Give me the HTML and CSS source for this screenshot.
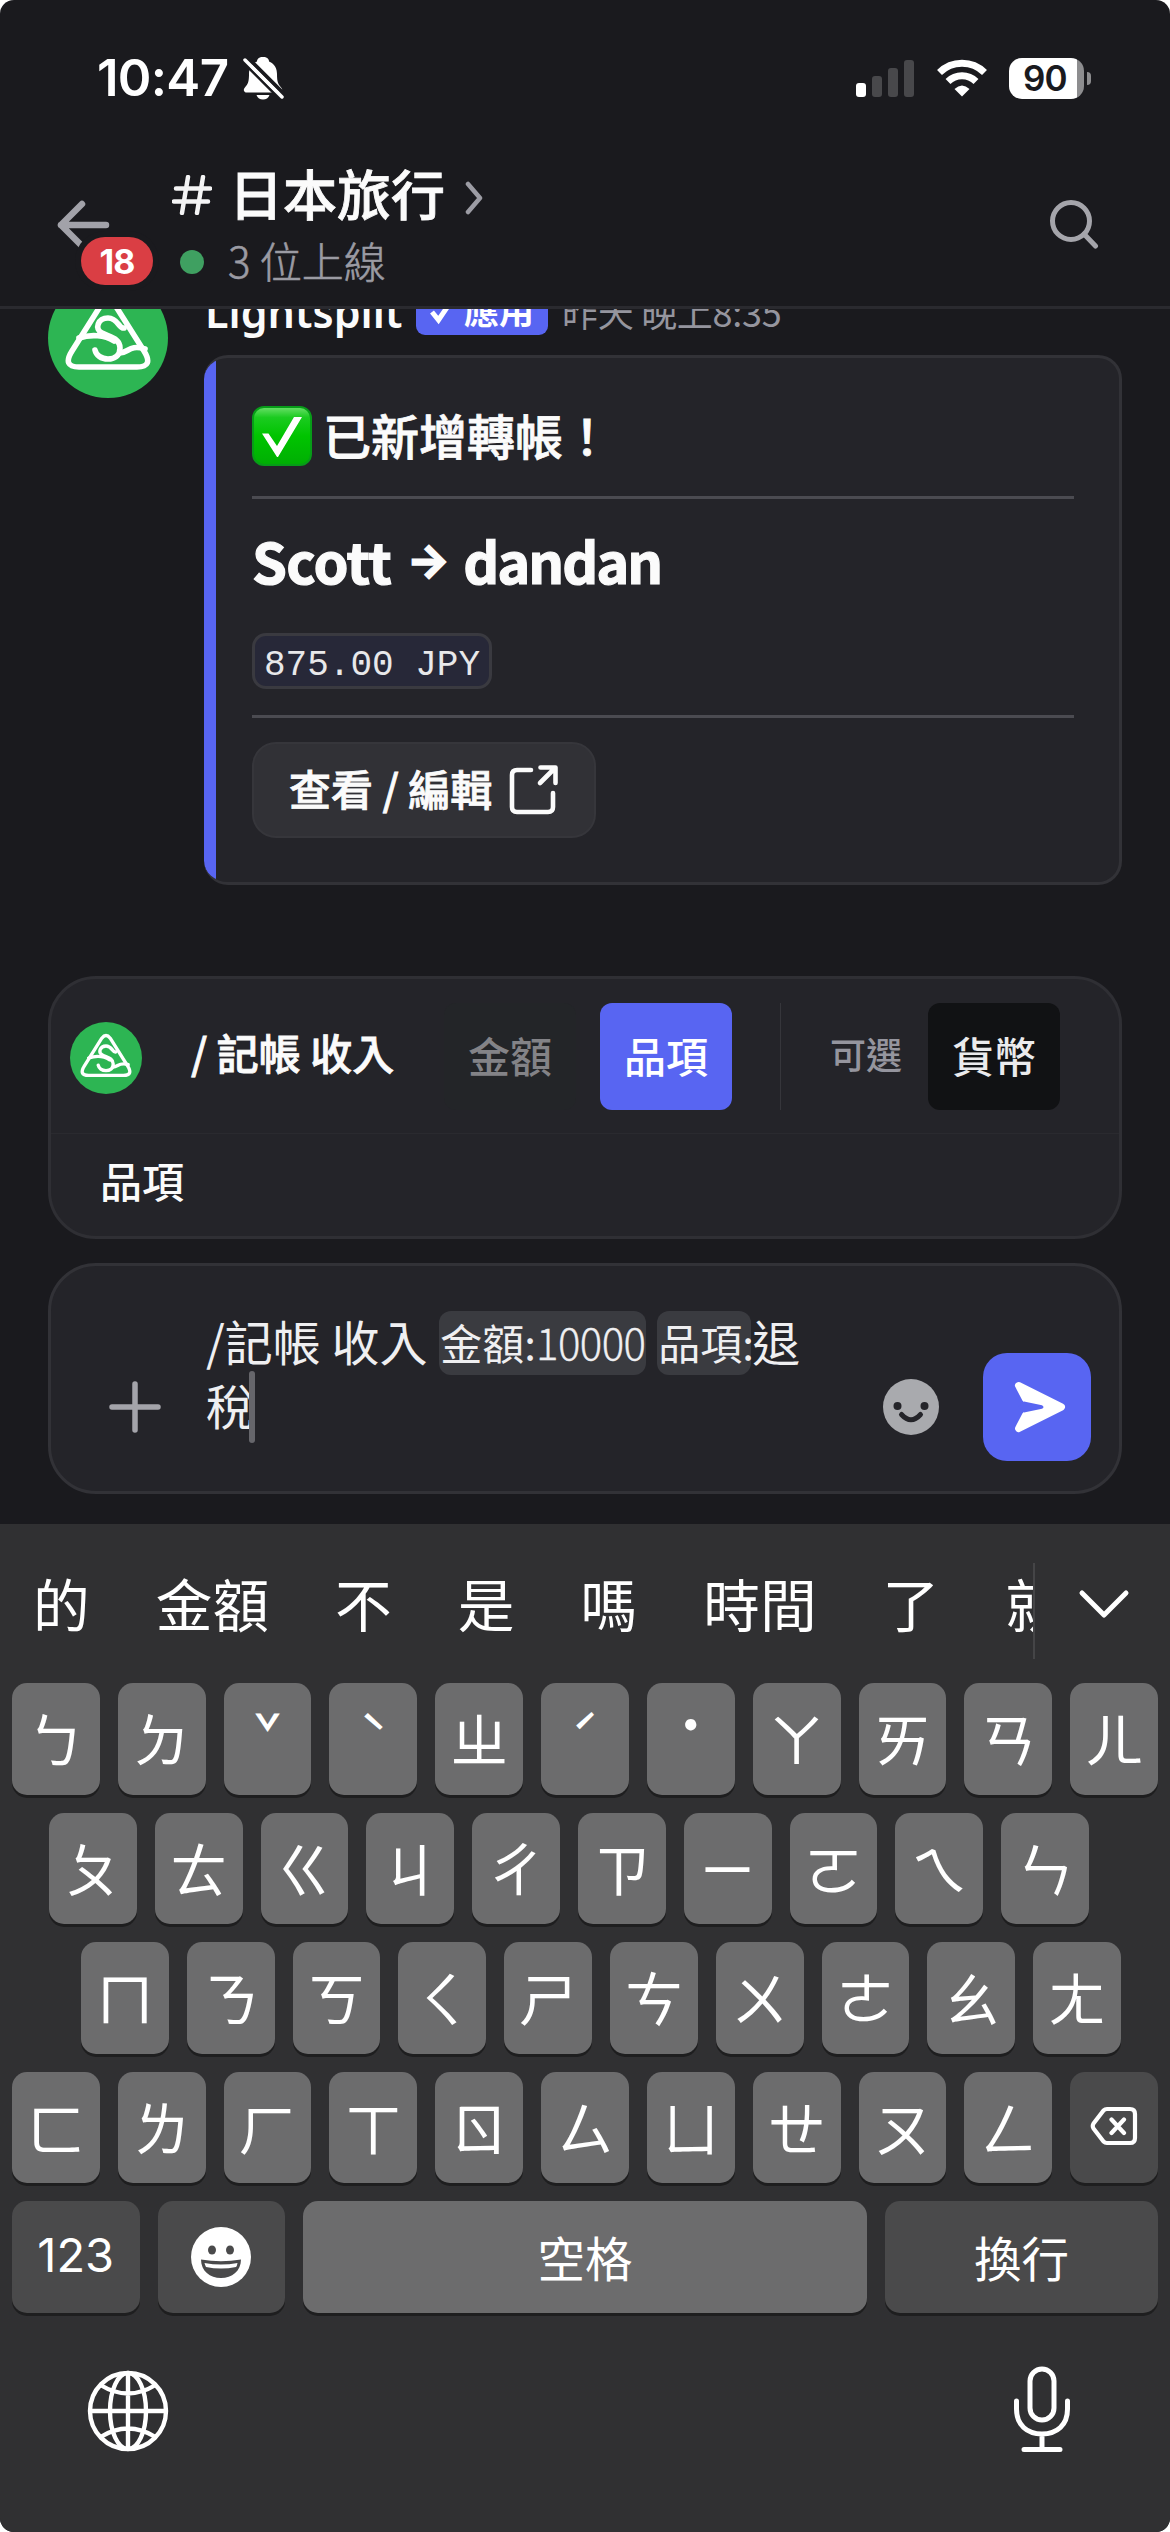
FILE: index.html
```html
<!DOCTYPE html>
<html lang="zh-Hant">
<head>
<meta charset="utf-8">
<title>日本旅行</title>
<link rel="stylesheet" href="styles.css">
</head>
<body>
<svg width="0" height="0" class="defs">
  <symbol id="logo" viewBox="0 0 120 120">
    <circle cx="60" cy="60" r="60" fill="#2db553"/>
    <g fill="none" stroke="#fff" stroke-width="5.600" stroke-linecap="round" stroke-linejoin="round">
      <path d="M53 27Q60 18 67 27L96 73Q106 89 89 89H31Q14 89 24 73Z"/>
      <path d="M76 50C71 51 70 40 60 40C50 40 46 51 54 55C61 59 72 60 72 70C72 78 66 81 60 81C53 81 48 77 47 72"/>
      <path d="M31 60C43 56 57 57 66 63M72 75C80 75 82 66 97 71"/>
    </g>
  </symbol>
</svg>
<div class="phone">
  <div class="status">
    <span class="time">10:47</span>
    <svg class="bell" width="42" height="44" viewBox="0 0 42 44">
      <path fill="#fff" d="M20 1C16 1 14 3 14 5.500C8 8 6 13 6 18C6 26 5 28 1.500 32C0 34 1 36.500 4 36.500H36C39 36.500 40 34 38.500 32C35 28 34 26 34 18C34 13 32 8 26 5.500C26 3 24 1 20 1ZM13.500 39H26.500C25.500 42 23 43.500 20 43.500C17 43.500 14.500 42 13.500 39Z"/>
      <path d="M4 1L42 39" stroke="#1a1a1e" stroke-width="4"/>
      <path d="M0 6L38 44" stroke="#1a1a1e" stroke-width="3"/>
      <path d="M2 4L39 41" stroke="#fff" stroke-width="3.500" stroke-linecap="round"/>
    </svg>
    <svg class="signal" width="58" height="37" viewBox="0 0 58 37">
      <rect x="0" y="23" width="10" height="14" rx="3" fill="#fff"/>
      <g fill="#48484b"><rect x="16" y="16" width="10" height="21" rx="3"/><rect x="32" y="8" width="10" height="29" rx="3"/><rect x="48" y="0" width="10" height="37" rx="3"/></g>
    </svg>
    <svg class="wifi" width="52" height="38" viewBox="0 0 52 38">
      <g fill="none" stroke="#fff" stroke-width="7"><path d="M3.500 13.500A32 32 0 0 1 48.500 13.500"/><path d="M12 22.500A20 20 0 0 1 40 22.500"/></g>
      <path fill="#fff" d="M26 37.500L18.500 30Q26 23 33.500 30Z"/>
    </svg>
    <div class="battery"><span>90</span></div>
    <i class="nub"></i>
  </div>

  <header class="header">
    <div class="back">
      <svg width="56" height="50" viewBox="0 0 56 50"><path d="M51 26H6M27 5L6 26L27 47" fill="none" stroke="#a2a2a9" stroke-width="6.500" stroke-linecap="round" stroke-linejoin="round"/></svg>
      <span class="badge">18</span>
    </div>
    <div class="channel">
      <div class="title">
        <svg width="40" height="40" viewBox="0 0 40 40"><path d="M16 2L10 38M31 2L25 38M4 13.500H38M2 26.500H36" fill="none" stroke="#f4f4f5" stroke-width="4.500" stroke-linecap="round"/></svg>
        <h1>日本旅行</h1>
        <svg class="chevron" width="18" height="36" viewBox="0 0 18 36"><path d="M3 4L15 18L3 32" fill="none" stroke="#9c9ca4" stroke-width="4.500" stroke-linecap="round" stroke-linejoin="round"/></svg>
      </div>
      <div class="online"><i></i><span>3 位上線</span></div>
    </div>
    <svg class="search" width="50" height="56" viewBox="0 0 50 56"><g fill="none" stroke="#a5a5ab" stroke-width="5" stroke-linecap="round"><circle cx="22" cy="22" r="18.500"/><path d="M35 35L46.500 47"/></g></svg>
  </header>

  <main class="messages">
    <article class="message">
      <svg class="avatar" width="120" height="120"><use href="#logo"/></svg>
      <div class="body">
        <div class="meta">
          <span class="author">Lightsplit</span>
          <span class="app"><svg width="24" height="28" viewBox="0 0 24 28"><path d="M3 14L9.500 22L21 5" fill="none" stroke="#fff" stroke-width="5"/></svg><span>應用</span></span>
          <span class="date">昨天 晚上8:35</span>
        </div>
        <div class="card">
          <div class="headline">
            <svg width="60" height="60" viewBox="0 0 60 60">
              <defs><linearGradient id="g" x1="0" y1="0" x2="0" y2="1"><stop offset="0" stop-color="#6be06a"/><stop offset=".18" stop-color="#1bcb20"/><stop offset=".5" stop-color="#00c400"/><stop offset="1" stop-color="#00ae04"/></linearGradient></defs>
              <rect x="1" y="1" width="58" height="58" rx="11" fill="url(#g)" stroke="#079c18" stroke-width="2"/>
              <path fill="#fff" d="M10 27.500H16.500L25 40L42 11H50L26 51H25Z"/>
            </svg>
            <span>已新增轉帳！</span>
          </div>
          <hr>
          <h2><span>Scott</span><span class="arrow">→</span><span class="to">dandan</span></h2>
          <code>875.00 JPY</code>
          <hr class="second">
          <button class="edit"><span>查看 / 編輯</span>
            <svg width="50" height="52" viewBox="0 0 50 52"><path d="M22 6H8Q3 6 3 11V43Q3 48 8 48H39Q44 48 44 43V29M31.500 3.500H46.500V19M46 4L31 19" fill="none" stroke="#fbfbfb" stroke-width="4.600" stroke-linecap="round" stroke-linejoin="round"/></svg>
          </button>
        </div>
      </div>
    </article>
  </main>

  <section class="command">
    <div class="options">
      <svg class="mini" width="72" height="72"><use href="#logo"/></svg>
      <b class="name">/ 記帳 收入</b>
      <span class="chip done">金額</span>
      <span class="chip active">品項</span>
      <i class="rule"></i>
      <span class="optional">可選</span>
      <span class="chip dark">貨幣</span>
    </div>
    <div class="hint">品項</div>
  </section>

  <section class="composer">
    <svg class="plus" width="52" height="52" viewBox="0 0 52 52"><path d="M26 3V49M3 26H49" stroke="#a4a4aa" stroke-width="5.500" stroke-linecap="round"/></svg>
    <div class="input"><div class="line"><span>/記帳 收入 </span><span class="tag amount">金額:<span class="num">10000</span></span><span class="tag item">品項:</span><span>退</span></div><div class="line"><span>稅</span><i class="caret"></i></div></div>
    <svg class="smile" width="56" height="56" viewBox="0 0 56 56"><circle cx="28" cy="28" r="28" fill="#a9aaae"/><circle cx="14.500" cy="27" r="4" fill="#242429"/><circle cx="41.500" cy="27" r="4" fill="#242429"/><path d="M18.500 35.500Q28 46 37.500 35.500" fill="none" stroke="#242429" stroke-width="5" stroke-linecap="round"/></svg>
    <div class="send"><svg width="52" height="52" viewBox="0 0 52 52"><path d="M4.500 4.500L47.500 26L4.500 47.500L11.500 34L31 26.500V25.500L11.500 18Z" fill="#fff" stroke="#fff" stroke-width="7" stroke-linejoin="round"/><path d="M10 20.500L28 24.200Q31 26 28 27.800L10 31.500L4 26Z" fill="#5865f2"/></svg></div>
  </section>

  <section class="keyboard">
    <div class="candidates">
      <div class="words"><span>的</span><span>金額</span><span>不</span><span>是</span><span>嗎</span><span>時間</span><span>了</span><span>就</span></div>
      <svg class="more" width="52" height="30" viewBox="0 0 52 30"><path d="M4 4L26 26L48 4" fill="none" stroke="#fff" stroke-width="5" stroke-linecap="round" stroke-linejoin="round"/></svg>
    </div>
    <div class="row"><kbd>ㄅ</kbd><kbd>ㄉ</kbd><kbd class="tone">ˇ</kbd><kbd class="tone">ˋ</kbd><kbd>ㄓ</kbd><kbd class="tone">ˊ</kbd><kbd class="dot">˙</kbd><kbd>ㄚ</kbd><kbd>ㄞ</kbd><kbd>ㄢ</kbd><kbd>ㄦ</kbd></div>
    <div class="row r2"><kbd>ㄆ</kbd><kbd>ㄊ</kbd><kbd>ㄍ</kbd><kbd>ㄐ</kbd><kbd>ㄔ</kbd><kbd>ㄗ</kbd><kbd>ㄧ</kbd><kbd>ㄛ</kbd><kbd>ㄟ</kbd><kbd>ㄣ</kbd></div>
    <div class="row r3"><kbd>ㄇ</kbd><kbd>ㄋ</kbd><kbd>ㄎ</kbd><kbd>ㄑ</kbd><kbd>ㄕ</kbd><kbd>ㄘ</kbd><kbd>ㄨ</kbd><kbd>ㄜ</kbd><kbd>ㄠ</kbd><kbd>ㄤ</kbd></div>
    <div class="row"><kbd>ㄈ</kbd><kbd>ㄌ</kbd><kbd>ㄏ</kbd><kbd>ㄒ</kbd><kbd>ㄖ</kbd><kbd>ㄙ</kbd><kbd>ㄩ</kbd><kbd>ㄝ</kbd><kbd>ㄡ</kbd><kbd>ㄥ</kbd><kbd class="fn"><svg width="48" height="40" viewBox="0 0 48 40"><path d="M17 3H40Q45 3 45 8V32Q45 37 40 37H17Q15 37 13.500 35.500L3.500 22.500Q2 20 3.500 17.500L13.500 4.500Q15 3 17 3ZM21.500 13.500L34 27M34 13.500L21.500 27" fill="none" stroke="#fff" stroke-width="4.200" stroke-linecap="round" stroke-linejoin="round"/></svg></kbd></div>
    <div class="row bottom">
      <kbd class="fn num123">123</kbd>
      <kbd class="fn"><svg width="60" height="60" viewBox="0 0 60 60"><circle cx="30" cy="30" r="30" fill="#fff"/><g fill="#4a4a4b"><ellipse cx="21" cy="23" rx="4" ry="4.500"/><ellipse cx="39" cy="23" rx="4" ry="4.500"/><path d="M10 32.500Q30 36 50 32.500C50 44 41 51 30 51S10 44 10 32.500Z"/></g><path d="M13.500 36Q30 39 46.500 36Q46 39 45 40Q30 43 15 40Q14 38 13.500 36Z" fill="#fff"/></svg></kbd>
      <kbd class="space">空格</kbd>
      <kbd class="fn enter">換行</kbd>
    </div>
    <div class="tools">
      <svg class="globe" width="82" height="82" viewBox="0 0 82 82"><g fill="none" stroke="#fff" stroke-width="4.400"><circle cx="41" cy="41" r="38"/><ellipse cx="41" cy="41" rx="18" ry="38"/><path d="M41 3V79M3 41H79M13.500 15Q41 32 68.500 15M13.500 67Q41 50 68.500 67"/></g></svg>
      <svg width="58" height="86" viewBox="0 0 58 86"><g fill="none" stroke="#fff" stroke-width="5" stroke-linecap="round"><rect x="17" y="3" width="24" height="51" rx="12"/><path d="M3.500 35V43C3.500 59 14 68 29 68S54.500 59 54.500 43V35M29 68V83M11 83.500H47"/></g></svg>
    </div>
  </section>
</div>
</body>
</html>
```
FILE: styles.css
```css
* { box-sizing: border-box; }
body { margin: 0; background: #fff; font-family: "Noto Sans CJK TC", "Noto Sans", sans-serif; color: #fbfbfb; }
svg { display: block; flex: none; }
.defs { position: absolute; }
.phone { width: 1170px; height: 2532px; background: #1a1a1e; border-radius: 14px; overflow: hidden; display: flex; flex-direction: column; }

.status { height: 156px; padding: 0 79px 0 97px; display: flex; align-items: center; flex: none; }
.time { font: 600 51px/60px Inter, sans-serif; width: 132px; color: #fff; white-space: nowrap; letter-spacing: -.7px; }
.bell { margin-left: 14px; }
.signal { margin-left: auto; }
.wifi { margin-left: 22px; }
.battery { margin-left: 21px; width: 75px; height: 41px; border-radius: 13px; background: linear-gradient(90deg, #fff 68px, #8d8d8f 68px); color: #1a1a1e; font: 600 35px/41px Inter, sans-serif; letter-spacing: -1px; padding-left: 14px; }
.nub { width: 4px; height: 13px; margin-left: 3px; border-radius: 0 5px 5px 0; background: #8d8d8f; }

.header { height: 153px; flex: none; border-bottom: 3px solid #2a2a2f; display: flex; }
.back { position: relative; margin-left: 55px; width: 117px; padding-top: 43px; }
.badge { position: absolute; left: 26px; top: 81px; width: 72px; height: 48px; border-radius: 24px; background: #da3e44; box-shadow: 0 0 0 6px #1a1a1e; text-align: center; font: 700 34px/49px Inter, sans-serif; letter-spacing: -1px; color: #fff; }
.channel { flex: 1; }
.title { display: flex; align-items: center; height: 78px; }
h1 { margin: 0 20px 0 17px; padding-bottom: 4px; font-size: 54px; line-height: 56px; font-weight: 500; -webkit-text-stroke: .8px #fbfbfb; }
.chevron { margin-top: 6px; }
.online { display: flex; align-items: center; height: 56px; font-size: 42px; line-height: 44px; color: #9b9ba3; font-weight: 300; -webkit-text-stroke: .6px #9b9ba3; }
.online i { width: 24px; height: 24px; border-radius: 50%; background: #3fa061; margin: 0 24px 0 8px; }
.online span { padding-bottom: 4px; }
.search { margin: 43px 71px 0 0; }

.messages { height: 667px; flex: none; overflow: hidden; padding: 0 48px 91px; display: flex; flex-direction: column; justify-content: flex-end; }
.message { display: flex; flex: none; gap: 36px; }
.body { flex: 1; }
.meta { height: 77px; padding-bottom: 9px; display: flex; align-items: center; white-space: nowrap; }
.author { font: 600 43px/60px "Noto Sans", sans-serif; width: 198px; margin-left: 1px; }
.app { height: 46px; width: 132px; margin: 0 14px 0 13px; border-radius: 9px; background: #5865f2; display: flex; align-items: center; gap: 11px; padding-left: 13px; font-size: 35px; line-height: 38px; font-weight: 700; color: #fff; }
.app span { padding-bottom: 6px; }
.date { font-size: 36px; line-height: 44px; padding-bottom: 3px; letter-spacing: -.3px; color: #95959e; }
.card { height: 530px; border: 3px solid #323237; border-left: 0; border-radius: 24px; overflow: hidden; background: linear-gradient(90deg, #5865f2 12px, #242429 12px); padding: 0 45px 0 48px; }
.headline { height: 138px; padding-top: 18px; display: flex; align-items: center; gap: 11px; font-size: 48px; line-height: 60px; font-weight: 500; -webkit-text-stroke: .8px #fbfbfb; }
.headline span { padding-bottom: 4px; }
hr { margin: 0; border: 0; height: 3px; background: #4b4b51; }
h2 { margin: 0; height: 134px; padding-top: 19px; font-size: 56px; line-height: 84px; font-weight: 700; letter-spacing: -.6px; display: flex; -webkit-text-stroke: 1.200px #fbfbfb; }
.arrow { font: 800 46px/84px Inter, sans-serif; width: 40px; margin: 0 15px 0 17px; display: flex; justify-content: center; }
.to { letter-spacing: -2px; }
code { display: block; width: 240px; height: 56px; border: 3px solid #3a3a40; border-radius: 14px; background: #272838; padding-left: 9px; font: 36px/60px "Liberation Mono", monospace; color: #e8e8ea; white-space: pre; }
.second { margin-top: 26px; }
.edit { margin: 24px 0 0; width: 344px; height: 96px; border: 2px solid #36363b; border-radius: 24px; background: #313136; color: #fbfbfb; font: 500 42px/56px "Noto Sans CJK TC", sans-serif; padding: 0 0 0 35px; display: flex; align-items: center; gap: 17px; white-space: nowrap; -webkit-text-stroke: .8px #fbfbfb; }
.edit span { padding-bottom: 4px; }

.command { margin: 0 48px; height: 263px; flex: none; border: 3px solid #2f2f34; border-radius: 48px; background: #242429; }
.options { height: 155px; border-bottom: 1px solid #2a2a2f; display: flex; align-items: center; padding: 0 0 0 19px; font-size: 42px; font-weight: 500; white-space: nowrap; }
.mini { margin-top: 3px; }
.name { margin-left: 49px; width: 253px; font-weight: 500; -webkit-text-stroke: .8px #fbfbfb; padding-bottom: 9px; }
.chip { width: 132px; height: 107px; border-radius: 12px; display: flex; align-items: center; justify-content: center; padding-bottom: 4px; }
.done { background: #232528; color: #838387; }
.active { background: #5865f2; color: #fff; margin-left: 24px; }
.dark { background: #111214; color: #ebebed; }
.rule { width: 1px; height: 107px; background: #36363b; margin: 0 49px 0 48px; }
.optional { width: 98px; font-size: 36px; color: #95959e; font-weight: 500; padding-bottom: 6px; }
.hint { height: 102px; padding: 0 0 0 49px; font-size: 42px; line-height: 92px; font-weight: 500; }

.composer { margin: 24px 48px 30px; height: 231px; flex: none; border: 3px solid #323237; border-radius: 48px; background: #242429; display: flex; color: #efeff1; }
.plus { margin: 115px 0 0 58px; }
.input { margin: 45px 0 0 45px; width: 677px; font-size: 48px; font-weight: 400; white-space: pre; }
.line { display: flex; height: 64px; line-height: 59px; }
.tag { height: 64px; background: #3a3b40; border-radius: 12px; font-size: 42px; line-height: 61px; padding-left: 1px; }
.amount { width: 207px; margin-left: 1px; }
.item { width: 94px; margin: 0 1px 0 11px; }
.num { font-weight: 300; letter-spacing: -.6px; -webkit-text-stroke: .3px #efeff1; }
.caret { width: 6px; height: 72px; border-radius: 3px; background: #66666b; margin: -4px 0 -4px -5px; }
.smile { margin: 113px 44px 0 0; }
.send { margin-top: 87px; width: 108px; height: 108px; border-radius: 24px; background: #5865f2; display: flex; align-items: center; justify-content: center; padding-left: 6px; }

.keyboard { flex: 1; background: #303032; padding: 0 12px; display: flex; flex-direction: column; gap: 18px; color: #fff; }
.candidates { height: 141px; display: flex; margin-left: -12px; padding-top: 39px; }
.words { width: 1035px; height: 96px; border-right: 2px solid #454547; overflow: hidden; display: flex; gap: 66px; padding-left: 33px; font-size: 56.700px; line-height: 78px; white-space: nowrap; }
.words span { flex: none; }
.more { margin: 26px 0 0 43px; }
.row { display: flex; gap: 18px; height: 111.500px; }
.r2 { padding: 0 69px 0 37px; }
.r3 { padding: 0 37px 0 69px; }
kbd { flex: 1 1 0; min-width: 0; background: #6c6c6d; border-radius: 15px; box-shadow: 0 3px 0 #1e1e1f; display: flex; align-items: center; justify-content: center; font: 400 58px/1 "Noto Sans CJK TC", sans-serif; padding-bottom: 3px; }
.tone { padding: 0 0 15px; font-size: 46px; font-weight: 500; }
.dot { padding-bottom: 33px; font-weight: 500; }
.fn { background: #4a4a4b; }
.bottom kbd { flex: 0 0 127.500px; font-size: 47.500px; padding-bottom: 0; }
.bottom .num123 { font: 400 47px/1 Inter, sans-serif; padding-bottom: 4px; }
.bottom .space { flex: 1; }
.bottom .enter { flex-basis: 273px; }
.tools { display: flex; justify-content: space-between; align-items: center; padding: 0 87px 0 75px; margin-top: 35px; height: 86px; }
.globe { margin-top: 5px; }
```
